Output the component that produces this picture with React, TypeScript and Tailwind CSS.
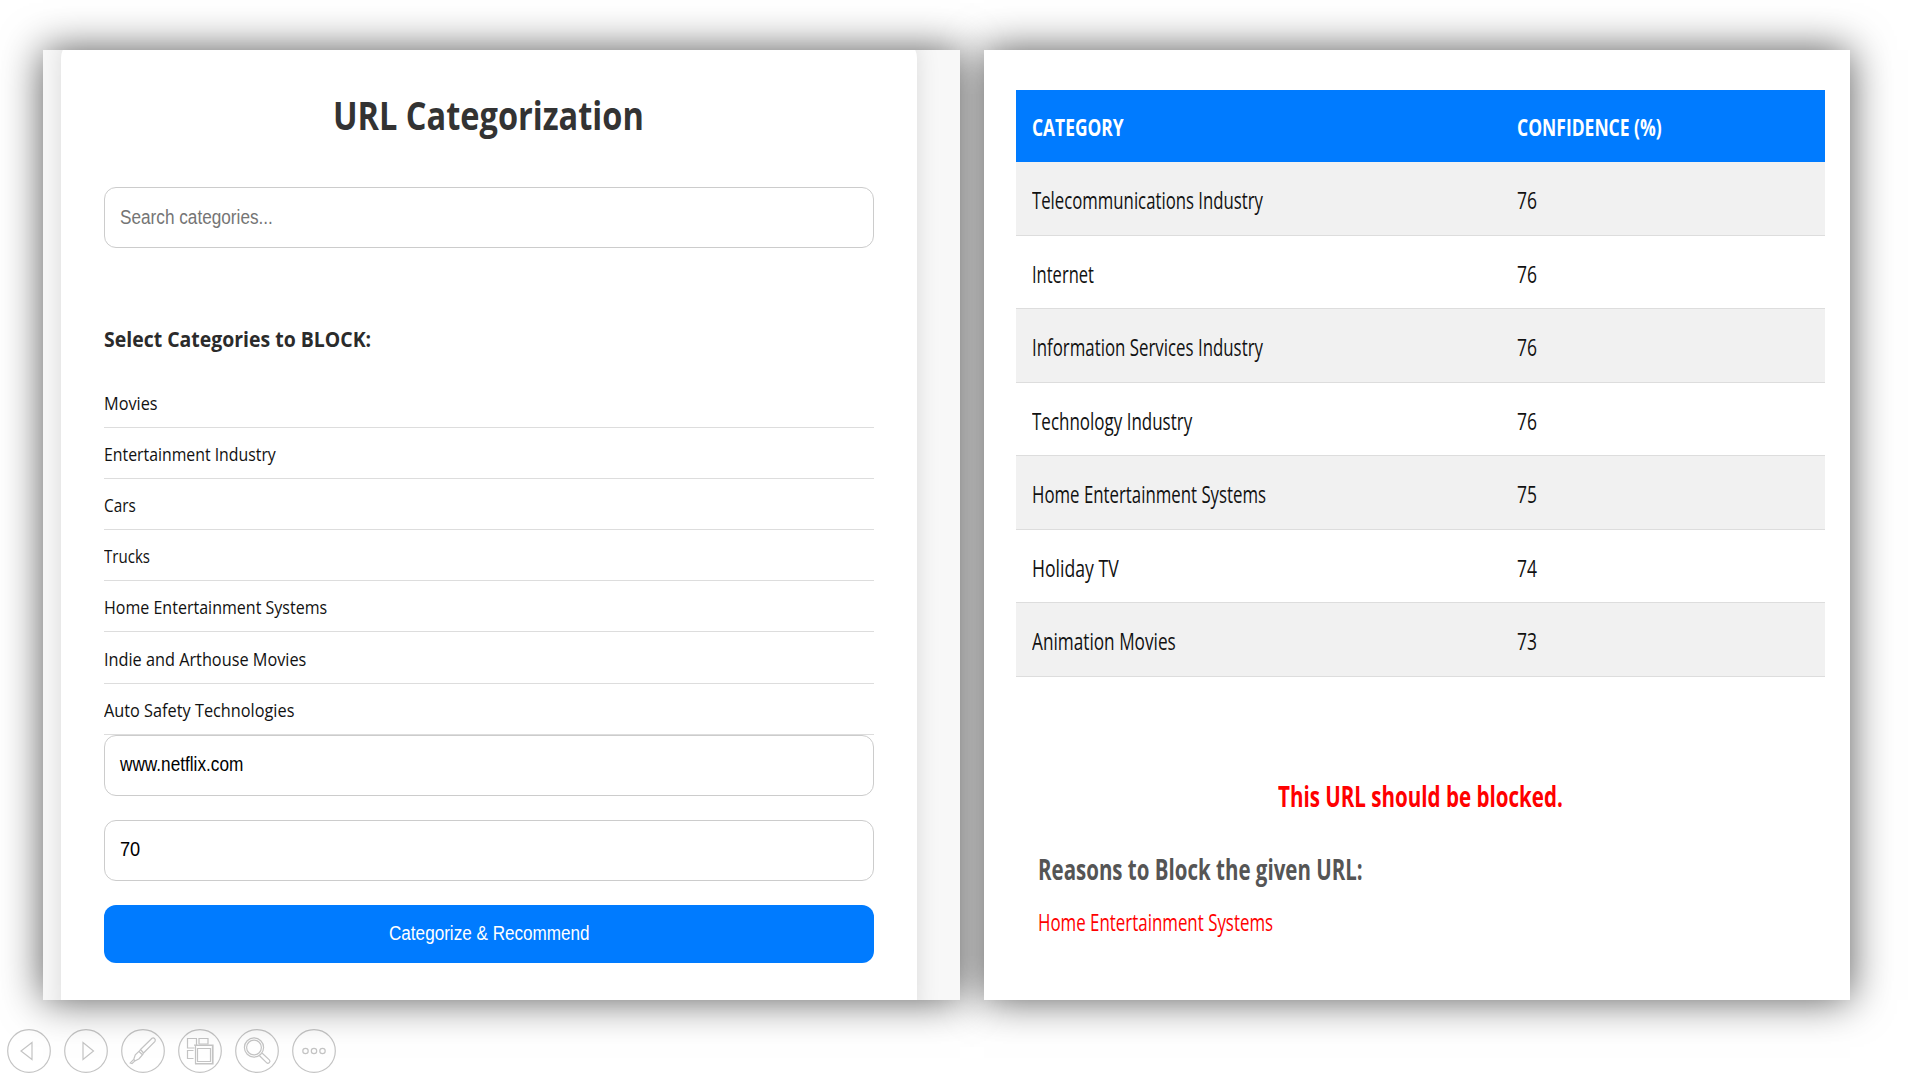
import { useLayoutEffect, useRef, useState } from "react";
import type { ReactNode } from "react";

type FitProps = { width: number; className?: string; children: ReactNode };

/** Condenses a single line of text so that it fills exactly the given width. */
function Fit({ width, className = "", children }: FitProps) {
  const ref = useRef<HTMLSpanElement>(null);
  const [scale, setScale] = useState(1);
  useLayoutEffect(() => {
    if (ref.current) setScale(width / ref.current.offsetWidth);
  }, [width]);
  return (
    <span className={`block ${className}`} style={{ width }}>
      <span
        ref={ref}
        className="inline-block origin-left whitespace-nowrap"
        style={{ transform: `scaleX(${scale})` }}
      >
        {children}
      </span>
    </span>
  );
}

const categories = [
  { name: "Movies", width: 54 },
  { name: "Entertainment Industry", width: 172 },
  { name: "Cars", width: 32 },
  { name: "Trucks", width: 46 },
  { name: "Home Entertainment Systems", width: 223 },
  { name: "Indie and Arthouse Movies", width: 202 },
  { name: "Auto Safety Technologies", width: 190 },
];

const results = [
  { name: "Telecommunications Industry", width: 231, value: 76 },
  { name: "Internet", width: 62, value: 76 },
  { name: "Information Services Industry", width: 231, value: 76 },
  { name: "Technology Industry", width: 160, value: 76 },
  { name: "Home Entertainment Systems", width: 234, value: 75 },
  { name: "Holiday TV", width: 87, value: 74 },
  { name: "Animation Movies", width: 144, value: 73 },
];

function CategorizationPanel() {
  return (
    <section className="h-[950px] w-[917px] overflow-hidden bg-[#f8f8f8] pl-[18px]">
      <div className="-mt-2.5 flex h-[980px] w-[856px] flex-col rounded-[18px] bg-white px-[43px] shadow-[0_0_24px_rgba(0,0,0,0.12)]">
        <h1 className="mt-[46px] flex justify-center pr-0.5 text-[39px] leading-[58px] font-bold text-[#333]">
          <Fit width={311}>URL Categorization</Fit>
        </h1>
        <div className="mt-[43px] flex h-[61px] items-center rounded-[12px] border border-[#ccc] pb-0.5 pl-[15px] font-['Liberation_Sans',sans-serif] text-[20px] leading-[30px] text-[#757575]">
          <Fit width={153}>Search categories...</Fit>
        </div>
        <h2 className="mt-[74px] text-[22px] leading-[32px] font-bold text-[#2b2b2b]">
          <Fit width={267}>Select Categories to BLOCK:</Fit>
        </h2>
        <ul className="mt-[23px] text-[18.7px] leading-[26px] text-[#111]">
          {categories.map((c) => (
            <li key={c.name} className="flex h-[51.1px] items-center border-b border-[#ddd] pt-0.5">
              <Fit width={c.width}>{c.name}</Fit>
            </li>
          ))}
        </ul>
        <div className="flex h-[61px] shrink-0 items-center rounded-[12px] border border-[#ccc] pb-0.5 pl-[15px] font-['Liberation_Sans',sans-serif] text-[20px] leading-[30px] text-black">
          <Fit width={123}>www.netflix.com</Fit>
        </div>
        <div className="mt-6 flex h-[61px] shrink-0 items-center rounded-[12px] border border-[#ccc] pb-0.5 pl-[15px] font-['Liberation_Sans',sans-serif] text-[20px] leading-[30px] text-black">
          <Fit width={20}>70</Fit>
        </div>
        <button className="mt-6 flex h-[58px] shrink-0 items-center justify-center rounded-[12px] bg-[#007bff] pb-0.5 font-['Liberation_Sans',sans-serif] text-[20px] leading-[30px] text-white">
          <Fit width={201}>Categorize &amp; Recommend</Fit>
        </button>
      </div>
    </section>
  );
}

function ResultsPanel() {
  return (
    <section className="h-[950px] w-[866px] bg-white pt-10 pl-8">
      <div className="w-[809px]">
        <div className="grid h-[72px] grid-cols-[485px_1fr] items-center bg-[#007bff] pt-0.5 pl-4 text-[24px] leading-[34px] font-bold text-white">
          <Fit width={92}>CATEGORY</Fit>
          <Fit width={145}>CONFIDENCE (%)</Fit>
        </div>
        {results.map((r) => (
          <div
            key={r.name}
            className="grid h-[73.5px] grid-cols-[485px_1fr] items-center border-b border-[#ddd] pt-1 pl-4 text-[24.5px] leading-[34px] text-[#111] odd:bg-white even:bg-[#f1f1f1]"
          >
            <Fit width={r.width}>{r.name}</Fit>
            <Fit width={20}>{r.value}</Fit>
          </div>
        ))}
        <p className="mt-[98px] flex justify-center text-[29px] leading-[42px] font-bold text-[#f00]">
          <Fit width={285}>This URL should be blocked.</Fit>
        </p>
        <h3 className="mt-[31px] pl-[22px] text-[28.5px] leading-[42px] font-bold text-[#555]">
          <Fit width={325}>Reasons to Block the given URL:</Fit>
        </h3>
        <p className="mt-[14px] pl-[22px] text-[24.5px] leading-[36px] text-[#f00]">
          <Fit width={235}>Home Entertainment Systems</Fit>
        </p>
      </div>
    </section>
  );
}

const icons: { label: string; art: ReactNode }[] = [
  { label: "Previous", art: <path d="M25 13.5v17L14 22z" /> },
  { label: "Next", art: <path d="M19 13.5v17L29.500 22z" /> },
  {
    label: "Pen",
    art: (
      <path d="M19.500 20.500 31 9.300a2.200 2.200 0 0 1 3 3L22.500 24zM18 22.500l3.200 3M19.500 20.500l-.8 1.200-4.400 4.200-1.600 4.600-3.400 3.400 1.800.6 2.800-2.600 4.200-2.200 3.700-4.300.700-1.400M12.700 30.500l1.400 1.300" />
    ),
  },
  {
    label: "Slides",
    art: (
      <>
        <path d="M16.500 19H9.500V9.500h9V16M21 15V9.500h9V15H21M15.500 29.500h-6v-8h6" />
        <path d="M16.500 16.500h18v18h-17v-18M16 16h19v19H17" />
        <path d="M19.500 19.500h13v13h-13z" />
      </>
    ),
  },
  {
    label: "Zoom",
    art: (
      <>
        <circle cx="19" cy="18.500" r="9.600" />
        <circle cx="19" cy="18.500" r="7.400" />
        <path d="m24.300 26.500 7.200 7.200a1.900 1.900 0 0 0 2.800-2.800L27 24" />
      </>
    ),
  },
  {
    label: "More",
    art: (
      <>
        <circle cx="13.500" cy="22" r="2.700" />
        <circle cx="22" cy="22" r="2.700" />
        <circle cx="30.500" cy="22" r="2.700" />
      </>
    ),
  },
];

export default function App() {
  return (
    <main className="flex h-[1077px] w-[1918px] flex-col overflow-hidden bg-white font-['Open_Sans','Noto_Sans',sans-serif]">
      {/* Shadows sit on a layer beneath both panels, so neither darkens its neighbour. */}
      <div className="isolate flex gap-6 pt-[50px] pl-[43px]">
        <div className="relative before:absolute before:inset-0 before:-z-10 before:shadow-[0_0_39px_rgba(0,0,0,0.66)] before:content-['']">
          <CategorizationPanel />
        </div>
        <div className="relative before:absolute before:inset-0 before:-z-10 before:shadow-[0_0_39px_rgba(0,0,0,0.66)] before:content-['']">
          <ResultsPanel />
        </div>
      </div>
      <nav className="mt-[29px] flex gap-[13px] pl-[6.5px]">
        {icons.map((icon) => (
          <button key={icon.label} aria-label={icon.label} className="size-11">
            <svg viewBox="0 0 44 44" className="size-11 fill-none stroke-[#c4c4c4] stroke-[1.2]">
              <circle cx="22" cy="22" r="21.300" className="fill-white/60" />
              {icon.art}
            </svg>
          </button>
        ))}
      </nav>
    </main>
  );
}
